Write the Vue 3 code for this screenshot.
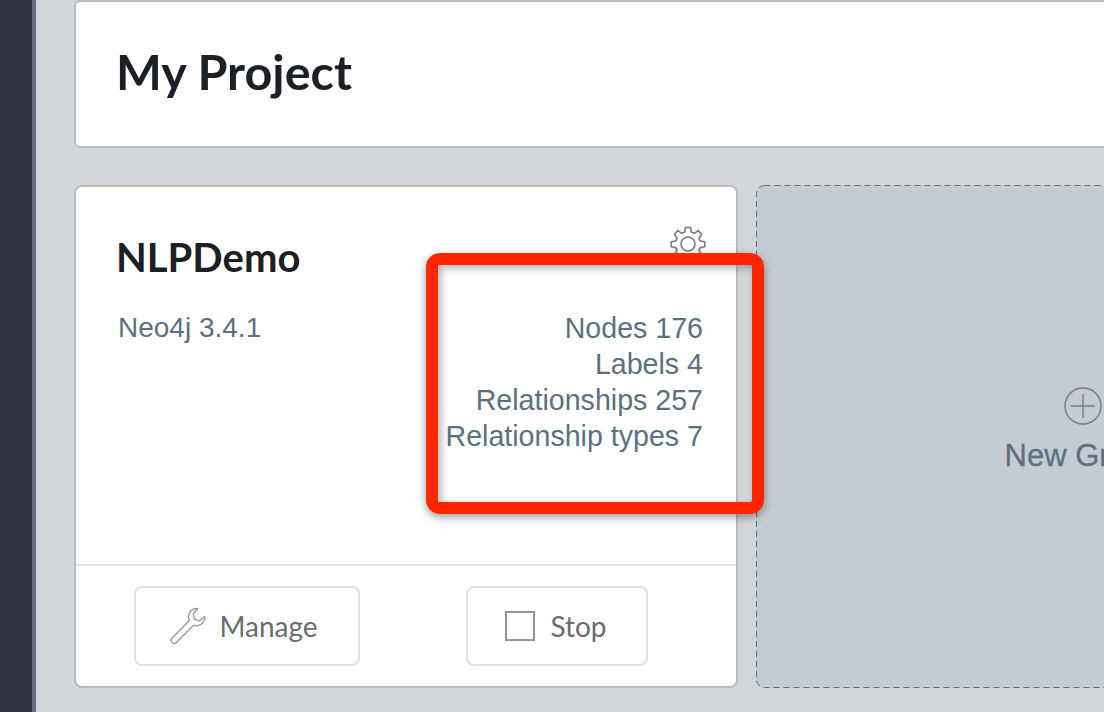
<script setup>
const stats = ['Nodes 176', 'Labels 4', 'Relationships 257', 'Relationship types 7']
</script>

<template>
  <div class="page">
    <aside class="rail"></aside>
    <main class="content">
      <header class="project"><h1>My Project</h1></header>
      <section class="row">
        <article class="card">
          <div class="card-body">
            <div class="title-row">
              <h2>NLPDemo</h2>
              <svg class="gear" viewBox="0 0 36 36" width="36" height="36" fill="none" stroke="#7b7b7b" stroke-width="1.6">
                <path d="M15.5 1.5h5l.8 4.6 3 1.2 3.8-2.7 3.6 3.600-2.700 3.800 1.200 3 4.600.8v5l-4.600.8-1.200 3 2.700 3.800-3.600 3.600-3.800-2.700-3 1.200-.8 4.600h-5l-.8-4.600-3-1.200-3.800 2.700-3.600-3.600 2.700-3.800-1.200-3-4.600-.8v-5l4.600-.8 1.200-3-2.700-3.800 3.600-3.600 3.800 2.700 3-1.200z" stroke-linejoin="round" />
                <circle cx="18" cy="18" r="7" />
              </svg>
            </div>
            <div class="info">
              <span class="version">Neo4j 3.4.1</span>
              <div class="stats">
                <div v-for="s in stats" :key="s">{{ s }}</div>
              </div>
            </div>
          </div>
          <footer class="actions">
            <button class="btn manage">
              <svg viewBox="0 0 36 38" width="36" height="38" fill="none" stroke="#959595" stroke-width="1.3" stroke-linejoin="round">
                <path d="M27.500 1.500c-4.600-.4-8.700 2.900-9 7.500-.1 1.600.2 3.100.9 4.400L1.800 31.500c-1 1-1 2.500 0 3.500l.8.8c1 1 2.500 1 3.500 0l17.600-17.700c1.400.6 2.800.8 4.200.5 4.300-.7 7.300-4.700 6.700-9.100l-4.800 4.300-5.200-1.400-1.400-5.300z" />
              </svg>
              <span>Manage</span>
            </button>
            <button class="btn stop">
              <span class="square"></span>
              <span>Stop</span>
            </button>
          </footer>
        </article>
        <article class="new-card">
          <svg class="dashes" width="654" height="503" fill="none">
            <rect x="0.5" y="0.5" width="653" height="502" rx="8" stroke="#5d7080" stroke-dasharray="6 4" />
          </svg>
          <span class="plus">
            <svg viewBox="0 0 38 38" width="38" height="38" fill="none" stroke="#77797c" stroke-width="1.4">
              <circle cx="19" cy="19" r="18" />
              <path d="M19 7v24M7 19h24" />
            </svg>
          </span>
          <span class="new-label">New Graph</span>
        </article>
      </section>
    </main>
    <div class="callout"></div>
  </div>
</template>

<style scoped>
.page {
  position: relative;
  display: flex;
  width: 1104px;
  height: 712px;
  overflow: hidden;
  background: #d3d6da;
  font-family: "Liberation Sans", Arial, sans-serif;
}
.rail {
  flex: none;
  width: 32px;
  background: #30333d;
  border-right: 4px solid #6a6f7c;
}
.content {
  flex: none;
  width: 1100px;
  margin-left: 38px;
}
.project {
  box-sizing: border-box;
  height: 148px;
  padding: 41px 0 0 40px;
  background: #fff;
  border: 2px solid #b7bbc1;
  border-radius: 6px;
}
h1, h2 {
  margin: 0;
  font-family: Lato, sans-serif;
  font-weight: 700;
  color: #1b2026;
}
h1 {
  font-size: 48.5px;
  line-height: 56px;
}
.row {
  display: flex;
  gap: 18px;
  margin-top: 37px;
}
.card {
  box-sizing: border-box;
  flex: none;
  display: flex;
  flex-direction: column;
  width: 664px;
  height: 503px;
  background: #fff;
  border: 2px solid #b7bbc1;
  border-radius: 8px;
}
.card-body {
  flex: 1;
  padding: 38px 33px 0 40px;
}
.title-row {
  position: relative;
  height: 85px;
}
h2 {
  padding-top: 9px;
  font-size: 40px;
  line-height: 46px;
}
.gear {
  position: absolute;
  right: -3px;
  top: 1px;
}
.info {
  display: flex;
  justify-content: space-between;
  padding-left: 2px;
  color: #5d7080;
  font-size: 28.6px;
  line-height: 36px;
}
.version {
  font-size: 28px;
}
.stats {
  text-align: right;
}
.actions {
  box-sizing: border-box;
  display: flex;
  gap: 106px;
  height: 122px;
  padding: 20px 0 0 58px;
  border-top: 2px solid #e0e1e3;
}
.btn {
  display: flex;
  align-items: center;
  justify-content: center;
  box-sizing: border-box;
  height: 80px;
  padding: 0 0 1px;
  background: #fff;
  border: 2px solid #e0e0e2;
  border-radius: 8px;
  font-family: Lato, sans-serif;
  font-size: 28px;
  color: #6c6c6c;
}
.manage {
  width: 226px;
  gap: 13px;
  padding-right: 6px;
}
.stop {
  width: 182px;
  gap: 15px;
  padding-right: 2px;
}
.square {
  box-sizing: border-box;
  width: 30px;
  height: 30px;
  border: 2px solid #959595;
}
.new-card {
  position: relative;
  box-sizing: border-box;
  flex: none;
  display: flex;
  flex-direction: column;
  align-items: center;
  width: 654px;
  height: 503px;
  padding-top: 202px;
  background: #c5cbd3;
  border-radius: 8px;
}
.dashes {
  position: absolute;
  left: 0;
  top: 0;
}
.plus {
  height: 38px;
}
.new-label {
  margin-top: 12px;
  color: #5d7080;
  font-size: 31px;
  line-height: 38px;
  -webkit-text-stroke: 0.3px #5d7080;
}
.callout {
  position: absolute;
  left: 426px;
  top: 253px;
  box-sizing: border-box;
  width: 338px;
  height: 261px;
  border: 12px solid #ff2600;
  border-radius: 14px;
  box-shadow: 0 3px 8px rgba(0, 0, 0, 0.4), inset 3px 3px 8px rgba(0, 0, 0, 0.3);
}
</style>
